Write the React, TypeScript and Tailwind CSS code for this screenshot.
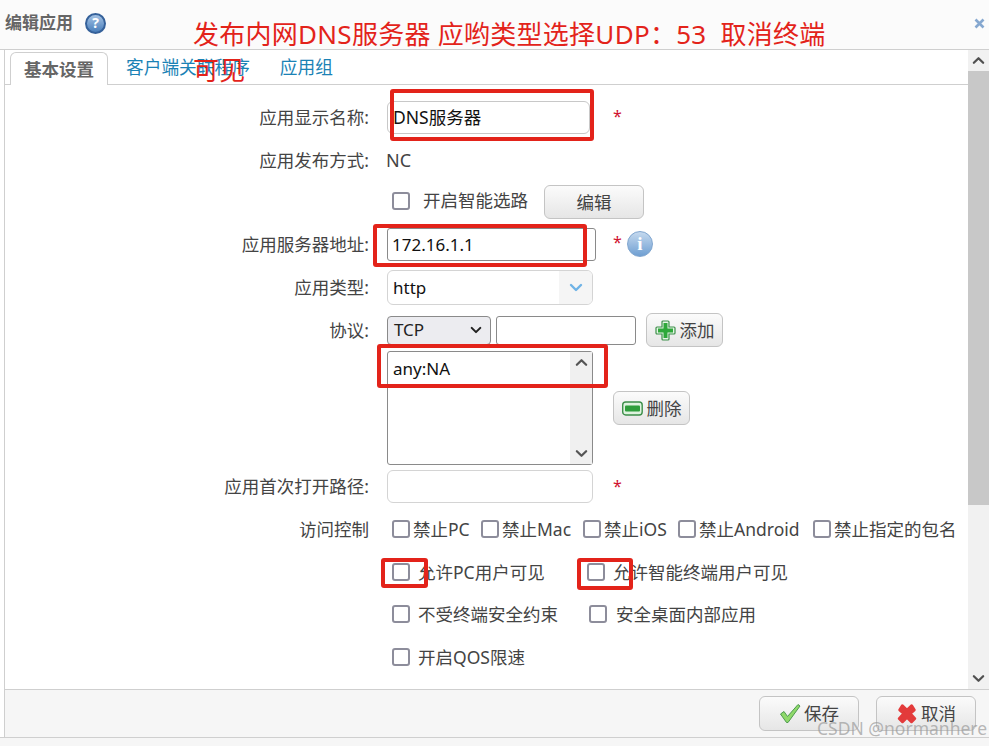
import type { ReactNode } from 'react'

const fontStack = 'font-["Noto_Sans","Noto_Sans_CJK_SC",sans-serif]'

interface RowProps {
  children: ReactNode
  className: string
  label?: string
}

function Row({ children, className, label }: RowProps) {
  return (
    <div className={`flex items-center ${className}`}>
      <div className="w-[364px] shrink-0 whitespace-nowrap text-right text-[17.5px] text-[#444]">
        {label}
      </div>
      <div className="ml-[18px] flex h-full items-center">{children}</div>
    </div>
  )
}

function CheckItem({ className, label, textClass }: { className?: string; label: string; textClass: string }) {
  return (
    <label className={`flex items-center whitespace-nowrap text-[17.5px] text-[#444] ${className ?? ''}`}>
      <input
        className="h-[18px] w-[18px] shrink-0 appearance-none rounded-[3px] border-2 border-[#8d8d9b] bg-white"
        type="checkbox"
      />
      <span className={textClass}>{label}</span>
    </label>
  )
}

function Star({ className }: { className: string }) {
  return <span className={`text-[16px] leading-none text-[#d01030] ${className}`}>*</span>
}

function Chevron({ className, up }: { className: string; up?: boolean }) {
  return (
    <svg className={className} fill="none" viewBox="0 0 14 9">
      <path
        d={up ? 'M2 7l5-5 5 5' : 'M2 2l5 5 5-5'}
        stroke="currentColor"
        strokeLinecap="round"
        strokeLinejoin="round"
        strokeWidth="2.4"
      />
    </svg>
  )
}

function Button({ children, className }: { children: ReactNode; className: string }) {
  return (
    <button
      className={`flex items-center justify-center whitespace-nowrap rounded-[6px] border border-[#c4c4c4] bg-gradient-to-b from-[#fbfbfb] to-[#e6e6e6] text-[17.5px] text-[#444] ${className}`}
      type="button"
    >
      {children}
    </button>
  )
}

function PlusIcon() {
  return (
    <svg className="mr-[4px] h-[21px] w-[21px] shrink-0" viewBox="0 0 21 21">
      <path
        d="M8 1h5a1 1 0 0 1 1 1v5h5a1 1 0 0 1 1 1v5a1 1 0 0 1-1 1h-5v5a1 1 0 0 1-1 1H8a1 1 0 0 1-1-1v-5H2a1 1 0 0 1-1-1V8a1 1 0 0 1 1-1h5V2a1 1 0 0 1 1-1z"
        fill="#e4f5e4"
        stroke="#3d8f4a"
        strokeWidth="1.2"
      />
      <path d="M8.500 3h4v5.500H18v4h-5.500V18h-4v-5.500H3v-4h5.500z" fill="#2ea83a" />
    </svg>
  )
}

function MinusIcon() {
  return (
    <svg className="mr-[4px] h-[15px] w-[21px] shrink-0" viewBox="0 0 21 15">
      <rect fill="#dff3df" height="13" rx="3" stroke="#3d8f4a" strokeWidth="1.4" width="19.500" x="0.700" y="1" />
      <rect fill="#2f9e3c" height="6" rx="1" width="15" x="3" y="4.500" />
    </svg>
  )
}

function CheckIcon() {
  return (
    <svg className="mr-[3px] h-[21px] w-[22px] shrink-0" viewBox="0 0 22 21">
      <path
        d="M1.500 11l3.500-2.500 3.500 5L19 1.500l2 1.500L9 19.500H7.500z"
        fill="#8fd96a"
        stroke="#4e9a50"
        strokeLinejoin="round"
      />
    </svg>
  )
}

function CrossIcon() {
  return (
    <svg className="mr-[3px] h-[21px] w-[22px] shrink-0" viewBox="0 0 22 21">
      <path
        d="M3.500 7l2.800-4.500L11 7l4.700-4.500L18.500 7l-4 3.500 4.500 5-3.500 3.500-4.500-4.500L6.500 19 3 15.500l4.500-5z"
        fill="#e33b3b"
        stroke="#e33b3b"
        strokeLinejoin="round"
        strokeWidth="2.500"
      />
    </svg>
  )
}

function RedBox({ className }: { className: string }) {
  return <div className={`pointer-events-none absolute rounded-[3px] border-[4px] border-[#e3231a] ${className}`} />
}

export default function App() {
  return (
    <div className={`relative flex h-[746px] w-[989px] flex-col overflow-hidden bg-[#f6f6f6] ${fontStack}`}>
      <header className="flex h-[50px] shrink-0 items-start justify-between border-b border-[#cfcfcf] bg-[#fbfbfb] pl-[5px]">
        <div className="mt-[11px] flex items-center">
          <span className="text-[17px] font-bold leading-[24px] text-[#666]">编辑应用</span>
          <span className="ml-[12px] flex h-[21px] w-[21px] items-center justify-center rounded-full border-2 border-[#35619a] bg-gradient-to-b from-[#a5c3e4] to-[#4a7fbb] text-[14px] font-bold leading-none text-white">
            ?
          </span>
        </div>
        <svg className="mr-[4px] mt-[18px] h-[11px] w-[11px] text-[#86a8d0]" viewBox="0 0 11 11">
          <path d="M1.500 1.500l8 8M9.500 1.500l-8 8" stroke="currentColor" strokeWidth="2.600" />
        </svg>
      </header>

      <div className="flex h-[688px] shrink-0 border-b border-[#cfcfcf] bg-white">
        <div className="flex min-w-0 flex-1 flex-col">
          <main className="ml-[4px] flex h-[639px] flex-col border-l border-[#cfcfcf]">
            <nav className="flex h-[35px] shrink-0 items-end border-b border-[#cfcfcf] pl-[5px]">
              <div className="-mb-px flex h-[33px] w-[98px] items-center justify-center rounded-t-[6px] border border-b-0 border-[#cfcfcf] bg-white text-[17.5px] font-bold text-[#666]">
                基本设置
              </div>
              <a className="ml-[18px] flex h-[33px] items-center text-[17.7px] text-[#1b82b5]">客户端关联程序</a>
              <a className="ml-[30px] flex h-[33px] items-center text-[17.7px] text-[#1b82b5]">应用组</a>
            </nav>

            <Row className="mt-[16px] h-[33px]" label="应用显示名称:">
              <div className="flex h-full w-[203px] items-center rounded-[6px] border border-[#c8c8c8] pl-[5px] text-[17.5px] text-[#111]">
                DNS服务器
              </div>
              <Star className="-mt-[4px] ml-[23px]" />
            </Row>
            <Row className="mt-[10px] h-[32px]" label="应用发布方式:">
              <span className="-ml-px text-[18px] text-[#444]">NC</span>
            </Row>
            <Row className="mt-[9px] h-[34px]">
              <CheckItem className="-mt-[3px] ml-[5px]" label="开启智能选路" textClass="ml-[13px]" />
              <Button className="ml-[16px] h-[34px] w-[100px]">编辑</Button>
            </Row>
            <Row className="mt-[9px] h-[33px]" label="应用服务器地址:">
              <div className="flex h-full w-[209px] items-center rounded-[3px] border border-[#8a8a8a] pl-[4px] text-[17px] text-[#111]">
                172.16.1.1
              </div>
              <Star className="-mt-[6px] ml-[17px]" />
              <span className="ml-[5px] flex h-[26px] w-[26px] -translate-y-[1px] items-center justify-center rounded-full border border-[#7fa5cf] bg-gradient-to-b from-[#c5d9ee] to-[#6f9fd2] font-['Liberation_Serif',serif] text-[19px] font-bold leading-none text-white">
                i
              </span>
            </Row>
            <Row className="mt-[9px] h-[35px]" label="应用类型:">
              <div className="flex h-full w-[206px] items-center justify-between overflow-hidden rounded-[6px] border border-[#d4d4d4] pl-[5px] text-[17px] text-[#111]">
                http
                <span className="flex h-full w-[33px] items-center justify-center bg-[#f5f5f5]">
                  <Chevron className="h-[9px] w-[14px] text-[#6fb3e6]" />
                </span>
              </div>
            </Row>
            <Row className="mt-[8px] h-[34px]" label="协议:">
              <div className="flex h-[29px] w-[104px] items-center justify-between rounded-[4px] border border-[#8a8a8a] bg-[#ececf0] pl-[6px] pr-[8px] text-[17px] text-[#222]">
                TCP
                <Chevron className="h-[8px] w-[12px] text-[#222]" />
              </div>
              <div className="ml-[5px] h-[29px] w-[140px] rounded-[3px] border border-[#8a8a8a] bg-white" />
              <Button className="ml-[10px] h-[34px] w-[77px]">
                <PlusIcon />
                添加
              </Button>
            </Row>
            <Row className="mt-[4px] h-[114px]">
              <div className="flex h-full w-[206px] rounded-[3px] border border-[#8a8a8a] bg-white">
                <div className="flex-1 pl-[5px] pt-[3px] text-[17px] leading-[28px] text-[#111]">any:NA</div>
                <div className="flex w-[22px] flex-col items-center justify-between bg-[#f0f0f0] py-[6px] text-[#555]">
                  <Chevron className="h-[9px] w-[13px]" up />
                  <Chevron className="h-[9px] w-[13px]" />
                </div>
              </div>
              <Button className="ml-[20px] h-[34px] w-[77px]">
                <MinusIcon />
                删除
              </Button>
            </Row>
            <Row className="mt-[5px] h-[33px]" label="应用首次打开路径:">
              <div className="h-full w-[206px] rounded-[6px] border border-[#d4d4d4] bg-white" />
              <Star className="-mt-[2px] ml-[20px]" />
            </Row>
            <Row className="mt-[10px] h-[32px]" label="访问控制">
              <div className="ml-[5px] flex items-center">
                <CheckItem className="w-[89px]" label="禁止PC" textClass="ml-[3px]" />
                <CheckItem className="w-[102px]" label="禁止Mac" textClass="ml-[3px]" />
                <CheckItem className="w-[95px]" label="禁止iOS" textClass="ml-[3px]" />
                <CheckItem className="w-[135px]" label="禁止Android" textClass="ml-[3px]" />
                <CheckItem label="禁止指定的包名" textClass="ml-[3px]" />
              </div>
            </Row>
            <Row className="mt-[11px] h-[32px]">
              <CheckItem className="ml-[5px] w-[195px]" label="允许PC用户可见" textClass="ml-[8px]" />
              <CheckItem label="允许智能终端用户可见" textClass="ml-[8px]" />
            </Row>
            <Row className="mt-[10px] h-[32px]">
              <CheckItem className="ml-[5px] w-[197px]" label="不受终端安全约束" textClass="ml-[8px]" />
              <CheckItem label="安全桌面内部应用" textClass="ml-[9px]" />
            </Row>
            <Row className="mt-[11px] h-[32px]">
              <CheckItem className="ml-[5px]" label="开启QOS限速" textClass="ml-[8px]" />
            </Row>
          </main>
        </div>
        <div className="flex h-[639px] w-[21px] shrink-0 flex-col bg-[#f1f1f1] text-[#505050]">
          <div className="flex h-[21px] items-center justify-center">
            <Chevron className="h-[9px] w-[13px]" up />
          </div>
          <div className="h-[434px] bg-[#c8c8c8]" />
          <div className="flex flex-1 items-end justify-center pb-[6px]">
            <Chevron className="h-[9px] w-[13px]" />
          </div>
        </div>
      </div>

      {/* footer sits in the last part of the frame, above the bottom rule */}
      <footer className="absolute left-[4px] right-0 top-[689px] flex h-[48px] items-center justify-end gap-[17px] border-l border-t border-[#cfcfcf] bg-[#f6f6f6] pr-[13px]">
        <Button className="h-[35px] w-[100px]">
          <CheckIcon />
          保存
        </Button>
        <Button className="h-[35px] w-[100px]">
          <CrossIcon />
          取消
        </Button>
      </footer>

      {/* annotations painted over the screenshot */}
      <div className="pointer-events-none absolute left-[193px] top-[16px] w-[640px] text-[26px] leading-[36px] tracking-[0.27px] text-[#e3231a]">
        发布内网DNS服务器 应哟类型选择UDP：53&nbsp; 取消终端可见
      </div>
      <RedBox className="left-[390px] top-[89px] h-[52px] w-[204px]" />
      <RedBox className="left-[373px] top-[224px] h-[43px] w-[214px]" />
      <RedBox className="left-[377px] top-[344px] h-[44px] w-[231px]" />
      <RedBox className="left-[381px] top-[558px] h-[30px] w-[47px]" />
      <RedBox className="left-[577px] top-[558px] h-[32px] w-[56px]" />
      <div className="pointer-events-none absolute left-[817px] top-[717px] text-[17.5px] leading-[22px] text-[#9a9a9a]/70">
        CSDN @normanhere
      </div>
    </div>
  )
}
